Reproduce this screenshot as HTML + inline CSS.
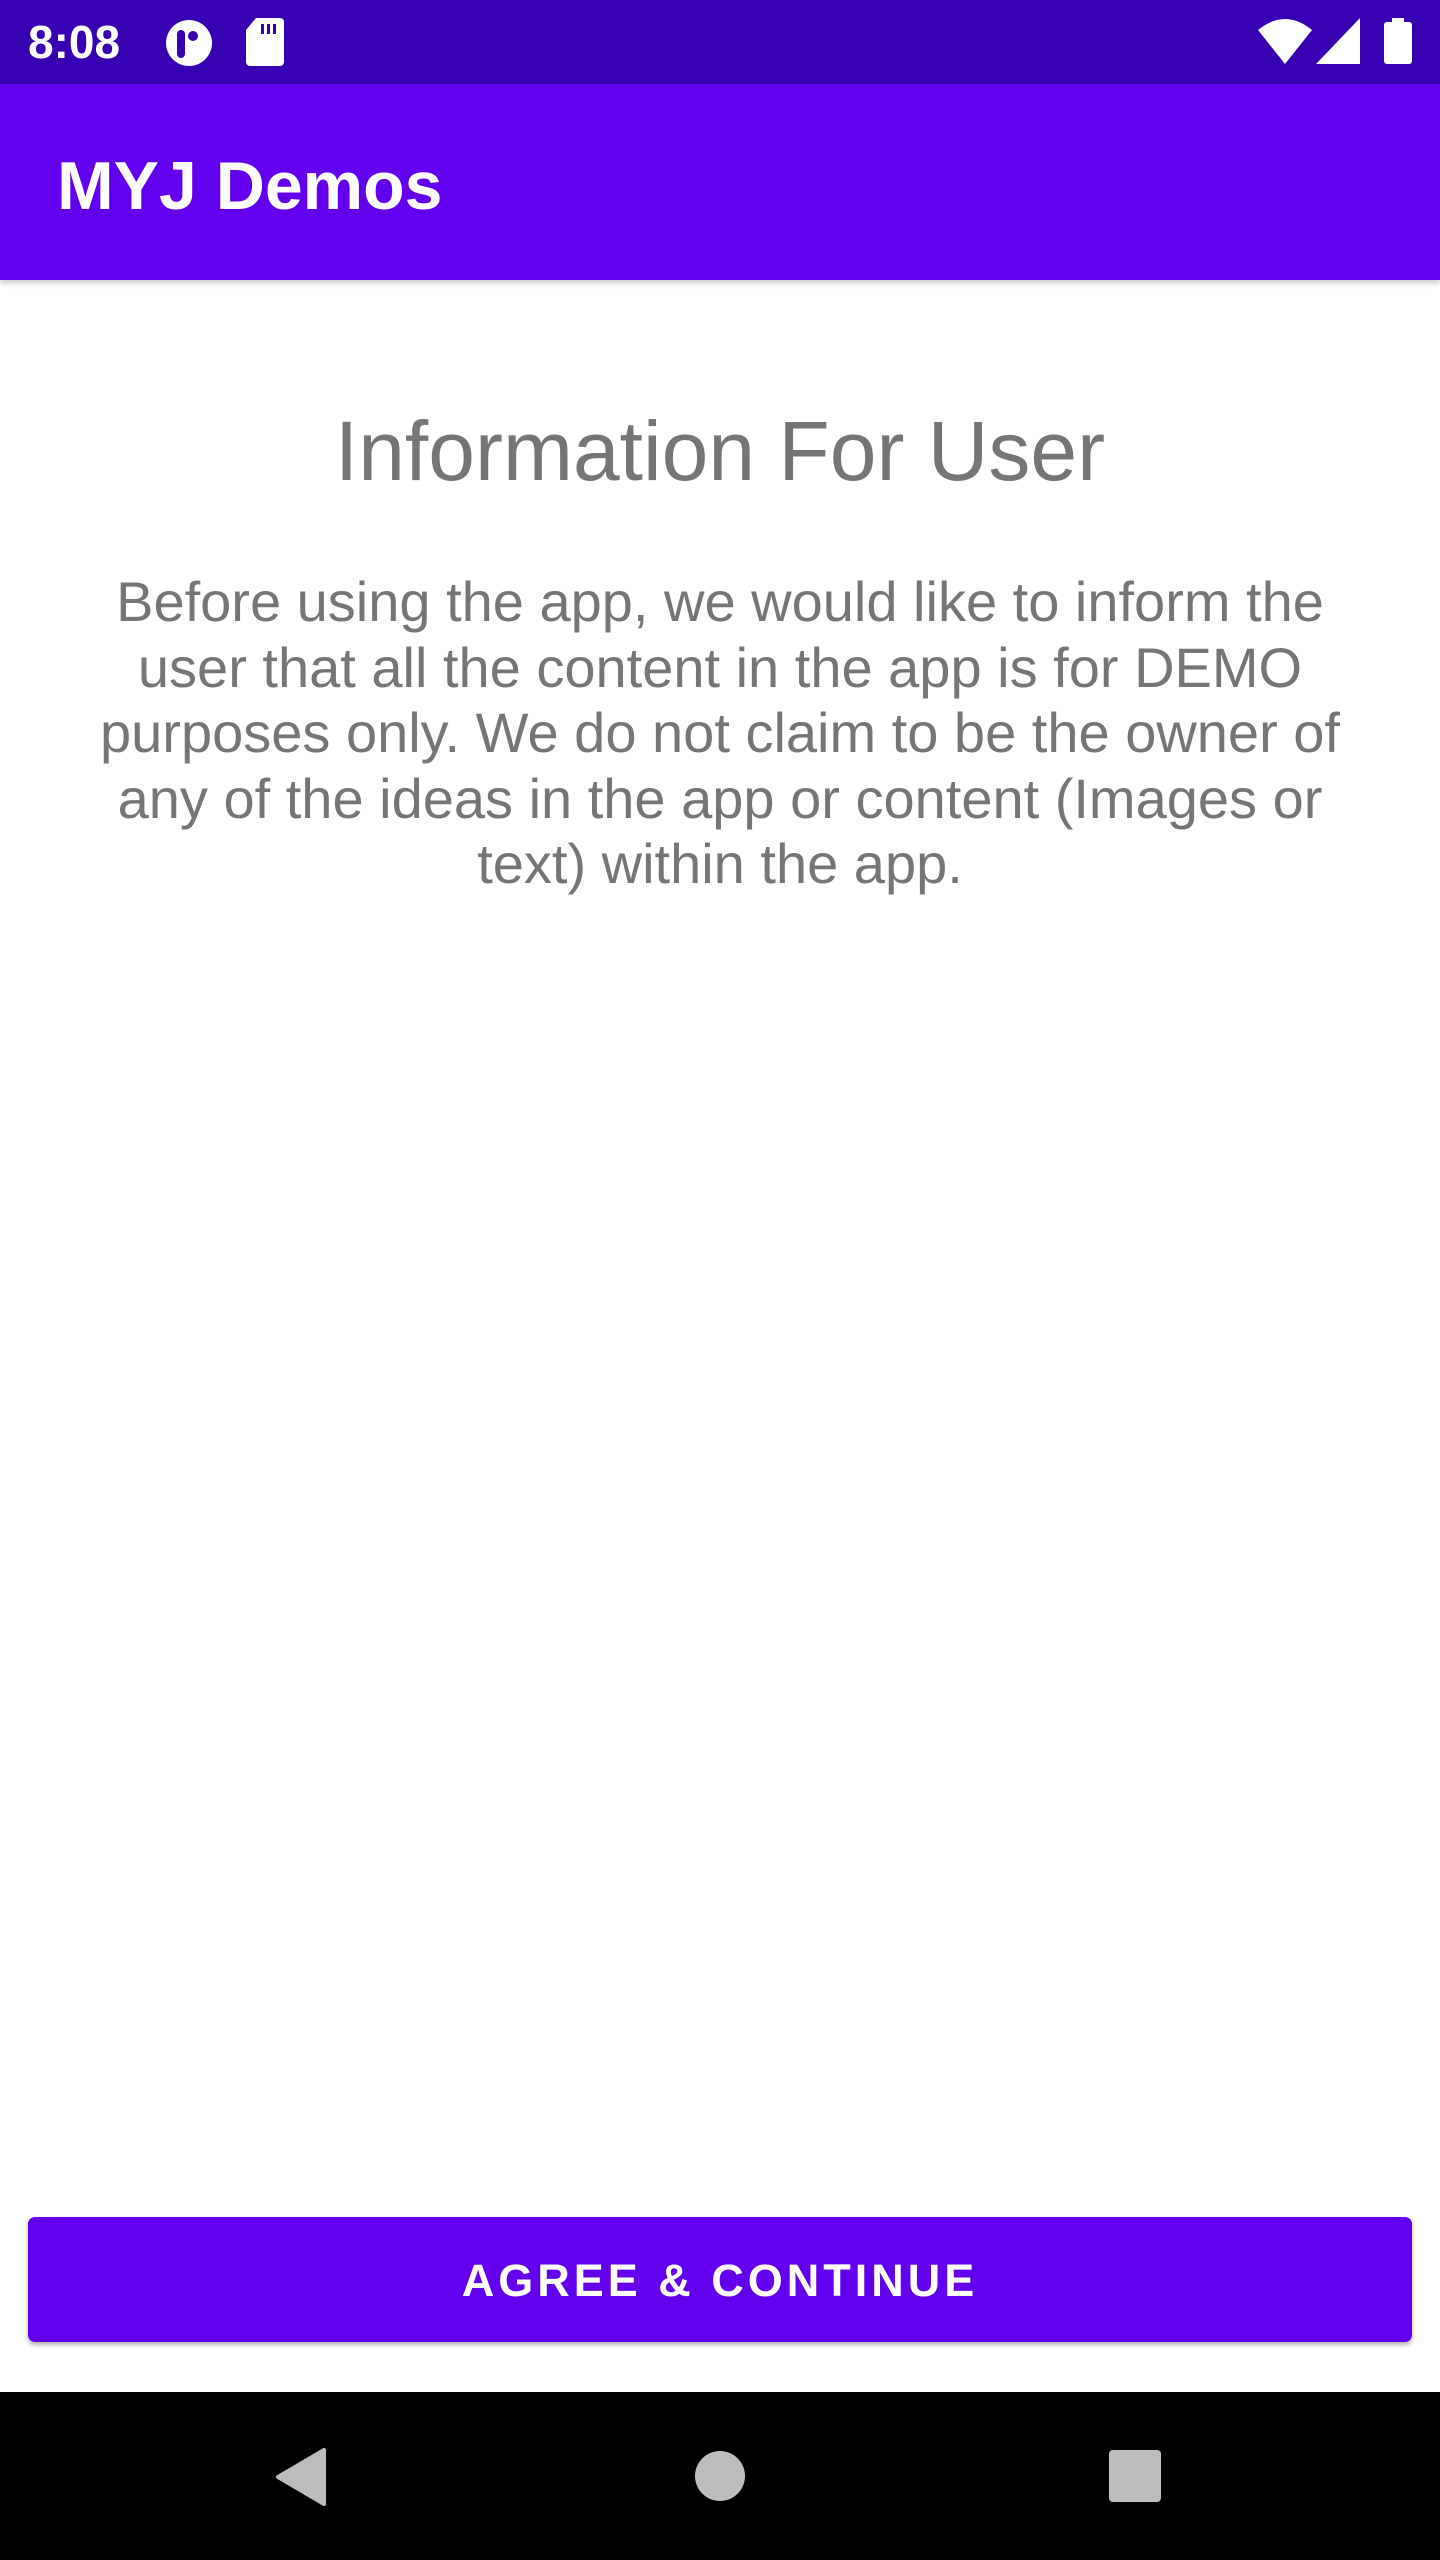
<!DOCTYPE html>
<html><head><meta charset="utf-8"><style>
*{margin:0;padding:0;box-sizing:border-box}
html,body{width:1440px;height:2560px;overflow:hidden;background:#fff;font-family:"Liberation Sans",Arial,sans-serif}
.sb{position:absolute;left:0;top:0;width:1440px;height:84px;background:#3700B3;color:#fff}
.time{position:absolute;left:28px;top:14px;font-size:46px;line-height:56px;font-weight:bold}
.ab{position:absolute;left:0;top:84px;width:1440px;height:196px;background:#6200EE;box-shadow:0 3px 6px rgba(0,0,0,0.2)}
.title{position:absolute;left:57px;top:62px;font-size:68px;line-height:80px;color:#fff;font-weight:bold}
h1{position:absolute;left:0;top:401px;width:1440px;text-align:center;font-weight:normal;font-size:84px;line-height:100px;color:#757575}
.body{position:absolute;left:80px;top:569px;width:1280px;text-align:center;font-size:56px;line-height:65.5px;color:#757575}
.btn{position:absolute;left:28px;top:2217px;width:1384px;height:125px;background:#6200EE;border-radius:7px;box-shadow:0 3px 5px rgba(0,0,0,0.3);color:#fff;text-align:center;font-size:45px;line-height:128px;letter-spacing:4px;font-weight:bold}
.nav{position:absolute;left:0;top:2392px;width:1440px;height:168px;background:#000}
</style></head><body>
<div class="sb">
<div class="time">8:08</div>
<svg style="position:absolute;left:164px;top:18px" width="50" height="50" viewBox="0 0 50 50"><circle cx="25" cy="25" r="23" fill="#fff"/><rect x="13" y="12" width="8" height="28" rx="4" fill="#3700B3"/><circle cx="29" cy="18" r="5" fill="#3700B3"/></svg>
<svg style="position:absolute;left:246px;top:18px" width="38" height="48" viewBox="0 0 38 48"><path d="M10 0H34a4 4 0 0 1 4 4V44a4 4 0 0 1-4 4H4a4 4 0 0 1-4-4V12Z" fill="#fff"/><rect x="15" y="6" width="3" height="10" fill="#3700B3"/><rect x="21" y="6" width="3" height="10" fill="#3700B3"/><rect x="27" y="6" width="3" height="10" fill="#3700B3"/></svg>
<svg style="position:absolute;left:1258px;top:18px" width="54" height="46" viewBox="0 0 54 46"><path d="M27 46L0 12Q27-10 54 12Z" fill="#fff"/></svg>
<svg style="position:absolute;left:1316px;top:18px" width="44" height="46" viewBox="0 0 44 46"><path d="M44 0V46H0Z" fill="#fff"/></svg>
<svg style="position:absolute;left:1384px;top:18px" width="28" height="46" viewBox="0 0 28 46"><rect x="8" y="0" width="12" height="6" fill="#fff"/><rect x="0" y="4" width="28" height="42" rx="3" fill="#fff"/></svg>
</div>
<div class="ab"><div class="title">MYJ Demos</div></div>
<h1>Information For User</h1>
<div class="body">Before using the app, we would like to inform the user that all the content in the app is for DEMO purposes only. We do not claim to be the owner of any of the ideas in the app or content (Images or text) within the app.</div>
<div class="btn">AGREE &amp; CONTINUE</div>
<div class="nav">
<svg style="position:absolute;left:274px;top:56px" width="52" height="58" viewBox="0 0 52 58"><path d="M50 2V56L4 29Z" fill="#bdbdbd" stroke="#bdbdbd" stroke-width="4" stroke-linejoin="round"/></svg>
<div style="position:absolute;left:695px;top:59px;width:50px;height:50px;border-radius:50%;background:#bdbdbd"></div>
<div style="position:absolute;left:1109px;top:58px;width:52px;height:52px;border-radius:4px;background:#bdbdbd"></div>
</div>
</body></html>
